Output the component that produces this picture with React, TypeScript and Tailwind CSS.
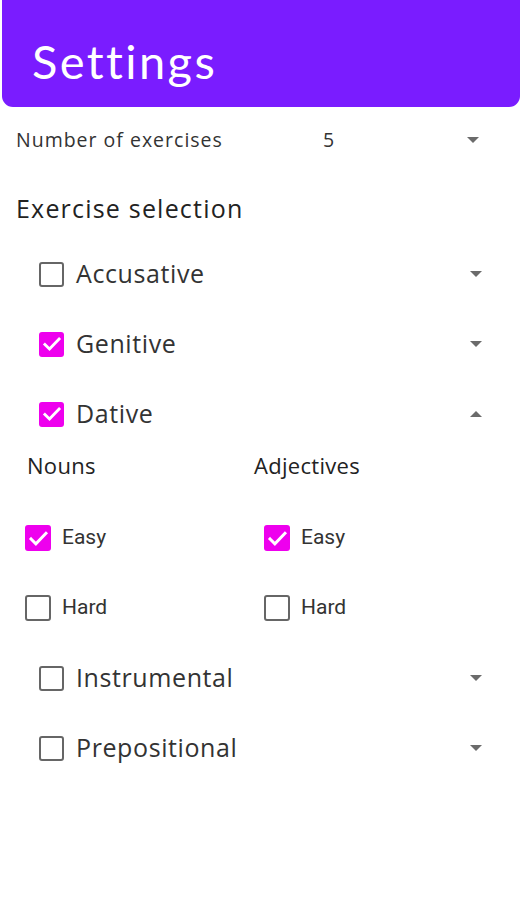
import React from "react";

function Box({ checked, size = 25 }: { checked: boolean; size?: number }) {
  if (checked) {
    return (
      <div className="flex items-center justify-center rounded-[3px] bg-[#ee00ee] shrink-0" style={{ width: size, height: size }}>
        <svg width={size - 5} height={size - 5} viewBox="0 0 24 24" fill="none">
          <path d="M3.5 12.5l5.5 5.5L20.5 6" stroke="white" strokeWidth="3.4" strokeLinecap="square" />
        </svg>
      </div>
    );
  }
  return <div className="rounded-[3px] border-[2.5px] border-[#666] bg-white shrink-0" style={{ width: size, height: size }} />;
}

function Tri({ up = false }: { up?: boolean }) {
  return (
    <svg width="12" height="6" viewBox="0 0 12 6">
      {up ? <path d="M0 6L6 0L12 6Z" fill="#6b6b6b" /> : <path d="M0 0L12 0L6 6Z" fill="#6b6b6b" />}
    </svg>
  );
}

function CaseRow({ label, checked, up = false }: { label: string; checked: boolean; up?: boolean }) {
  return (
    <div className="flex items-center h-[70px] pl-[39px] pr-[40px]">
      <Box checked={checked} />
      <span className="ml-[12px] text-[25px] tracking-[0.6px] text-[#333] font-['Open_Sans',sans-serif] flex-1">{label}</span>
      <Tri up={up} />
    </div>
  );
}

function Sub({ label, checked }: { label: string; checked: boolean }) {
  return (
    <div className="flex items-center h-[70px]">
      <Box checked={checked} size={26} />
      <span className="ml-[11px] text-[21px] text-[#333] font-['Roboto',sans-serif]">{label}</span>
    </div>
  );
}

export default function App() {
  return (
    <div className="w-[522px] h-[900px] bg-white font-['Open_Sans',sans-serif]">
      <div className="mx-[2px] h-[107px] bg-[#7a1cff] rounded-b-[11px] flex items-end pb-[22px] pl-[30px]">
        <h1 className="text-white text-[47px] leading-none font-['Lato',sans-serif] tracking-[2.4px]">Settings</h1>
      </div>
      <div className="flex items-center h-[66px] pl-[16px] pr-[43px]">
        <span className="text-[19.5px] tracking-[1px] text-[#333] w-[307px]">Number of exercises</span>
        <span className="text-[19.5px] text-[#333] flex-1">5</span>
        <Tri />
      </div>
      <div className="h-[66px] flex items-center pt-[6px] pl-[16px]">
        <span className="text-[25px] tracking-[1.2px] text-[#222]">Exercise selection</span>
      </div>
      <CaseRow label="Accusative" checked={false} />
      <CaseRow label="Genitive" checked={true} />
      <CaseRow label="Dative" checked={true} up />
      <div className="grid grid-cols-[239px_1fr] pl-[25px]">
        <div className="pl-[2px] h-[32px] flex items-center text-[22px] tracking-[0.3px] text-[#222]">Nouns</div>
        <div className="h-[32px] flex items-center text-[22px] tracking-[0.3px] text-[#222] -ml-[10px]">Adjectives</div>
      </div>
      <div className="grid grid-cols-[239px_1fr] pl-[25px] mt-[22px]">
        <div>
          <Sub label="Easy" checked={true} />
          <Sub label="Hard" checked={false} />
        </div>
        <div>
          <Sub label="Easy" checked={true} />
          <Sub label="Hard" checked={false} />
        </div>
      </div>
      <CaseRow label="Instrumental" checked={false} />
      <CaseRow label="Prepositional" checked={false} />
    </div>
  );
}
